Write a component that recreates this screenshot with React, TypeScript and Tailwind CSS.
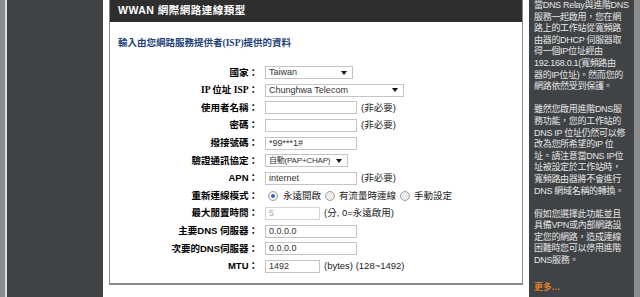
import type { ReactNode } from 'react';

const sideParas = [
  [
    '當DNS Relay與進階DNS',
    '服務一起啟用，您在網',
    '路上的工作站從寬頻路',
    '由器的DHCP 伺服器取',
    '得一個IP位址經由',
    '192.168.0.1(寬頻路由',
    '器的IP位址)。然而您的',
    '網路依然受到保護。',
  ],
  [
    '雖然您啟用進階DNS服',
    '務功能，您的工作站的',
    'DNS IP 位址仍然可以修',
    '改為您所希望的IP 位',
    '址。請注意當DNS IP位',
    '址被設定於工作站時，',
    '寬頻路由器將不會進行',
    'DNS 網域名稱的轉換。',
  ],
  ['假如您選擇此功能並且', '具備VPN或內部網路設', '定您的網路，造成連線', '困難時您可以停用進階', 'DNS服務。'],
];

function TextBox({ w, value = '', disabled = false }: { w: string; value?: string; disabled?: boolean }) {
  return (
    <div
      className={`flex h-[13px] items-center border bg-white pl-[3px] text-[9px] leading-none ${w} ${
        disabled ? 'border-[#d4d4d4] text-[#a8a8a8]' : 'border-[#c4c4c4] text-[#333]'
      }`}
    >
      {value}
    </div>
  );
}

function Select({ w, value, small = false }: { w: string; value: string; small?: boolean }) {
  return (
    <div className={`flex h-[13px] items-center justify-between border border-[#c4c4c4] bg-white pl-[3px] pr-[5px] leading-none text-[#333] ${w}`}>
      <span className={`whitespace-nowrap ${small ? 'text-[8px] tracking-[-0.2px]' : 'text-[9px]'}`}>{value}</span>
      <svg width="6" height="4" viewBox="0 0 6 4" className="shrink-0">
        <path d="M0 0h6L3 4z" fill="#111" />
      </svg>
    </div>
  );
}

function Radio({ checked = false }: { checked?: boolean }) {
  return (
    <span className="flex h-[10px] w-[10px] shrink-0 items-center justify-center rounded-full border border-[#a0a0a0] bg-[#ececec]">
      {checked && <span className="h-[4px] w-[4px] rounded-full bg-[#2d63b5] ring-1 ring-white" />}
    </span>
  );
}

function Note({ children }: { children: ReactNode }) {
  return <span className="ml-[4px] whitespace-nowrap text-[9.5px] text-[#222]">{children}</span>;
}

function Row({ label, serif = false, children }: { label: string; serif?: boolean; children: ReactNode }) {
  return (
    <div className="flex h-[17.6px] items-center">
      <div
        className={`w-[148px] shrink-0 text-right text-[9.5px] font-bold text-black ${
          serif ? "font-['Liberation_Serif','Noto_Sans_CJK_TC',serif]" : ''
        }`}
      >
        {label}
      </div>
      <div className="ml-[7px] flex items-center">{children}</div>
    </div>
  );
}

export default function App() {
  return (
    <div className="flex h-[297px] w-[640px] overflow-hidden bg-white font-['Liberation_Sans','Noto_Sans_CJK_TC',sans-serif]">
      {/* left frame */}
      <div className="w-[5px] shrink-0 bg-[#8c8c8c]" />
      <div className="w-[2px] shrink-0 bg-[#dcdcdc]" />
      <div className="w-[96px] shrink-0 bg-[#404345]" />
      <div className="w-[6px] shrink-0" />

      {/* main panel */}
      <div className="flex h-[285px] w-[414px] shrink-0 flex-col border-x border-b-2 border-[#8a8a8a]">
        <div className="flex h-[22px] items-center bg-[#2e2e2e] pl-[8px] text-[10.5px] font-bold tracking-[0.5px] text-white">
          WWAN 網際網路連線類型
        </div>

        <div className="mt-[15px] h-[13px] pl-[8px] font-['Liberation_Serif','Noto_Sans_CJK_TC',serif] text-[9.5px] font-bold leading-[13px] text-[#1f3f78]">
          輸入由您網路服務提供者(ISP)提供的資料
        </div>

        <div className="mt-[14px] flex flex-col">
          <Row label="國家：">
            <Select w="w-[88px]" value="Taiwan" />
          </Row>
          <Row label="IP 位址 ISP：" serif>
            <Select w="w-[139px]" value="Chunghwa Telecom" />
          </Row>
          <Row label="使用者名稱：">
            <TextBox w="w-[92px]" />
            <Note>(非必要)</Note>
          </Row>
          <Row label="密碼：">
            <TextBox w="w-[92px]" />
            <Note>(非必要)</Note>
          </Row>
          <Row label="撥接號碼：">
            <TextBox w="w-[92px]" value="*99***1#" />
          </Row>
          <Row label="驗證通訊協定：">
            <Select w="w-[83px]" value="自動(PAP+CHAP)" small />
          </Row>
          <Row label="APN：">
            <TextBox w="w-[92px]" value="internet" />
            <Note>(非必要)</Note>
          </Row>
          <Row label="重新連線模式：">
            <div className="flex items-center whitespace-nowrap text-[9.5px] text-[#222]">
              <span className="ml-[3px]">
                <Radio checked />
              </span>
              <span className="ml-[5px]">永遠開啟</span>
              <span className="ml-[4px]">
                <Radio />
              </span>
              <span className="ml-[4px]">有流量時連線</span>
              <span className="ml-[4px]">
                <Radio />
              </span>
              <span className="ml-[4px]">手動設定</span>
            </div>
          </Row>
          <Row label="最大閒置時間：">
            <TextBox w="w-[55px]" value="5" disabled />
            <Note>(分, 0=永遠啟用)</Note>
          </Row>
          <Row label="主要DNS 伺服器：">
            <TextBox w="w-[92px]" value="0.0.0.0" />
          </Row>
          <Row label="次要的DNS伺服器：">
            <TextBox w="w-[92px]" value="0.0.0.0" />
          </Row>
          <Row label="MTU：">
            <TextBox w="w-[55px]" value="1492" />
            <Note>(bytes) (128~1492)</Note>
          </Row>
        </div>
      </div>

      <div className="w-[6px] shrink-0" />

      {/* help sidebar */}
      <div className="w-[105px] shrink-0 overflow-hidden bg-[#404345] pl-[5px] text-[9px] leading-[11.6px] tracking-[-0.3px] text-[#e6e6e6]">
        <div className="flex flex-col gap-[11.6px]">
          {sideParas.map((p, i) => (
            <div key={i}>
              {p.map((line) => (
                <div key={line} className="whitespace-nowrap">
                  {line}
                </div>
              ))}
            </div>
          ))}
        </div>
        <div className="mt-[15px] font-bold text-[#d9792c]">更多…</div>
      </div>

      <div className="w-[6px] shrink-0 bg-[#8c8c8c]" />
    </div>
  );
}
